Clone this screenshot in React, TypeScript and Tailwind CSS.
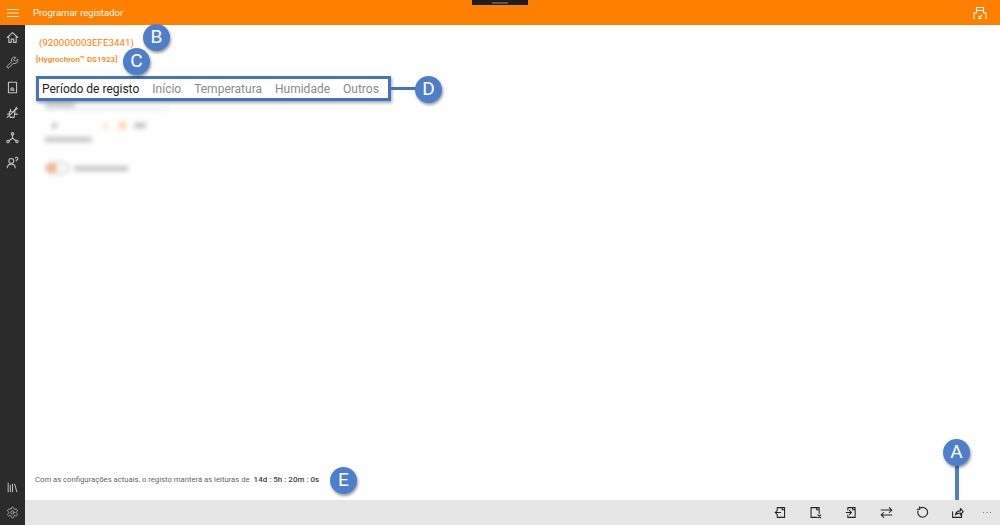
import React from "react";
import { Library, Settings, Wrench } from "lucide-react";

const Ico = ({ children, size = 13 }: { children: React.ReactNode; size?: number }) => (
  <svg width={size} height={size} viewBox="0 0 16 16" fill="none" stroke="currentColor" strokeWidth="1.3" strokeLinecap="round" strokeLinejoin="round">
    {children}
  </svg>
);

const navIcons = [
  <Ico key="h"><path d="M1.5 8 8 2l6.5 6M3.5 6.5V14h3v-4h3v4h3V6.5" /></Ico>,
  <Wrench key="w" size={13} strokeWidth={1.6} />,
  <Ico key="d"><rect x="3" y="1.500" width="10" height="13" /><path d="M6 11.500h4M6.500 11a1.500 1.500 0 1 1 2 0" /></Ico>,
  <Ico key="n"><path d="M4 7h7l-1 7H5zM5.500 7V4M9 7 13 1.500M2 10h2M11 10h3M1.500 14 14 3" /></Ico>,
  <Ico key="t"><circle cx="8" cy="3.500" r="1.500" /><circle cx="2.500" cy="13" r="1.500" /><circle cx="13.500" cy="13" r="1.500" /><path d="M8 5v4M8 9l-4.500 3M8 9l4.500 3" /></Ico>,
  <Ico key="u"><circle cx="6.500" cy="6" r="3" /><path d="M1.500 14.500c.5-3 2.500-4.500 5-4.500s4.500 1.500 5 4.500M11.500 2.500a1.600 1.600 0 1 1 1.800 2.300c-.5.300-.8.600-.8 1.200" /></Ico>,
];

const toolIcons = [
  <path key="a" d="M4 5V2h9v12H4v-3M8 8H1.500M4 5.500 1.500 8 4 10.500M10 2v2.500h3" />,
  <g key="b"><path d="M12.500 9V2h-10v12h7M9.500 2v2.500h3" /><path d="m11 11 3.500 3.500M14.500 11 11 14.500" /></g>,
  <path key="c" d="M3.500 5V2h9v12h-9v-3M1.500 8H8M5.500 5.500 8 8l-2.500 2.500M9.500 2v2.500h3" />,
  <path key="d" d="M1.500 5h13M11.500 2l3 3-3 3M14.500 11h-13M4.500 8l-3 3 3 3" />,
  <path key="e" d="M4 3.500A6 6 0 1 1 2.500 6M4.500 1v3h-3" />,
  <path key="f" d="M2 7v7h11v-4M5.500 11c.5-3 2.500-5 6-5V3l3.500 4-3.500 4V8.500c-2.500 0-4.500.8-6 2.500z" />,
];

const tabs = ["Início", "Temperatura", "Humidade", "Outros"];

const Badge = ({ letter, className }: { letter: string; className: string }) => (
  <div className={`absolute flex h-[27px] w-[27px] items-center justify-center rounded-full bg-[#4f7fcb] text-[19px] text-white shadow-[1px_2px_3px_rgba(0,0,0,0.4)] ${className}`}>
    {letter}
  </div>
);

export default function App() {
  return (
    <div className="relative flex h-[525px] w-[1000px] flex-col overflow-hidden bg-white font-['Roboto',sans-serif]">
      <header className="flex h-[25px] shrink-0 items-center bg-[#ff8000] text-white">
        <div className="flex w-[25px] justify-center">
          <svg width="12" height="8" viewBox="0 0 12 8" stroke="currentColor" strokeWidth="1" opacity="0.85">
            <path d="M0 .5h12M0 4h12M0 7.500h12" />
          </svg>
        </div>
        <span className="ml-2 pt-[2px] text-[9.500px]">Programar registador</span>
        <div className="ml-auto mr-[13px]">
          <svg width="14" height="14" viewBox="0 0 14 14" fill="none" stroke="currentColor" strokeWidth="1.100">
            <path d="M3.500 7V1.500h7V7M1 13V7h2.500M13 13V7h-2.500M3.500 4.500h7M5 12.500h4M5.500 10l1.300 1.300L9 9" />
          </svg>
        </div>
      </header>

      <div className="flex min-h-0 flex-1">
        <aside className="flex w-[25px] shrink-0 flex-col items-center bg-[#2b2b2b] text-[#c4c4c4]">
          <div className="mt-[6px] flex flex-col items-center gap-[12px]">{navIcons}</div>
          <div className="mt-auto mb-[6px] flex flex-col items-center gap-[12px]">
            <Library size={13} strokeWidth={1.8} />
            <Settings size={13} strokeWidth={1.4} />
          </div>
        </aside>

        <main className="flex min-w-0 flex-1 flex-col">
          <div className="flex min-h-0 flex-1 flex-col">
            <div className="ml-[14px] mt-[11px] text-[9.800px] leading-[14px] text-[#ff8000]">(920000003EFE3441)</div>
            <div className="ml-[11px] mt-[4px] text-[8px] font-medium leading-[12px] text-[#ff8000]">[Hygrochron™ DS1923]</div>

            <nav className="ml-[17px] mt-[14px] flex gap-[13px] text-[12px] leading-[18px] text-[#8a8a8a]">
              <span className="text-[#222222]">Período de registo</span>
              {tabs.map((t) => (
                <span key={t}>{t}</span>
              ))}
            </nav>

            <div className="ml-[20px] mt-[5px] w-[125px] opacity-70 blur-[2.500px]">
              <div className="h-[4px] w-[30px] bg-[#a5a5a5]" />
              <div className="mt-[1px] h-[2px] w-[125px] bg-[#d6dbe6]" />
              <div className="mt-[12px] flex items-center">
                <div className="ml-[7px] h-[5px] w-[5px] bg-[#9a9a9a]" />
                <div className="ml-[46px] h-[6px] w-[5px] bg-[#ffd9b0]" />
                <div className="ml-[11px] h-[7px] w-[7px] bg-[#ffb877]" />
                <div className="ml-[8px] h-[5px] w-[12px] bg-[#a0a0a0]" />
              </div>
              <div className="mt-[8px] h-[5px] w-[47px] bg-[#a8a8a8]" />
              <div className="mt-[20px] flex items-center gap-[5px]">
                <div className="flex h-[12px] w-[24px] items-center rounded-full border-2 border-[#bbbbbb]">
                  <div className="h-[10px] w-[10px] rounded-full bg-[#f0925a]" />
                </div>
                <div className="h-[5px] w-[54px] bg-[#a8a8a8]" />
              </div>
            </div>

            <div className="mb-[14px] ml-[10px] mt-auto flex items-baseline leading-[12px] text-[#666666]">
              <span className="text-[7.700px]">Com as configurações actuais, o registo manterá as leituras de</span>
              <span className="ml-[4px] text-[8px] font-medium text-[#444444]">14d : 5h : 20m : 0s</span>
            </div>
          </div>

          <footer className="flex h-[25px] shrink-0 items-center bg-[#e6e6e6] text-[#222222]">
            <div className="ml-auto mr-[9px] flex items-center">
              <div className="flex gap-[22.500px]">
                {toolIcons.map((icon, i) => (
                  <Ico key={i}>{icon}</Ico>
                ))}
              </div>
              <svg className="ml-[19px]" width="8" height="2" viewBox="0 0 8 2" fill="#777777">
                <rect x="0" y="0" width="1" height="1" />
                <rect x="3.500" y="0" width="1" height="1" />
                <rect x="7" y="0" width="1" height="1" />
              </svg>
            </div>
          </footer>
        </main>
      </div>

      {/* notch at top */}
      <div className="absolute left-[472px] top-0 flex h-[5px] w-[56px] items-center justify-center bg-[#1e1e1e]">
        <div className="h-[2px] w-[16px] bg-[#555555]" />
      </div>

      {/* callouts over the screenshot */}
      <div className="absolute left-[36px] top-[76px] h-[25px] w-[355px] border-[3px] border-[#4472c4] shadow-[1px_2px_3px_rgba(0,0,0,0.35)]" />
      <div className="absolute left-[391px] top-[87px] h-[3px] w-[27px] bg-[#4472c4]" />
      <div className="absolute left-[955px] top-[460px] h-[40px] w-[4px] bg-[#4f7fcb]" />
      <Badge letter="B" className="left-[143px] top-[24px]" />
      <Badge letter="C" className="left-[123px] top-[48px]" />
      <Badge letter="D" className="left-[415px] top-[76px]" />
      <Badge letter="E" className="left-[330px] top-[467px]" />
      <Badge letter="A" className="left-[943px] top-[439px]" />
    </div>
  );
}
